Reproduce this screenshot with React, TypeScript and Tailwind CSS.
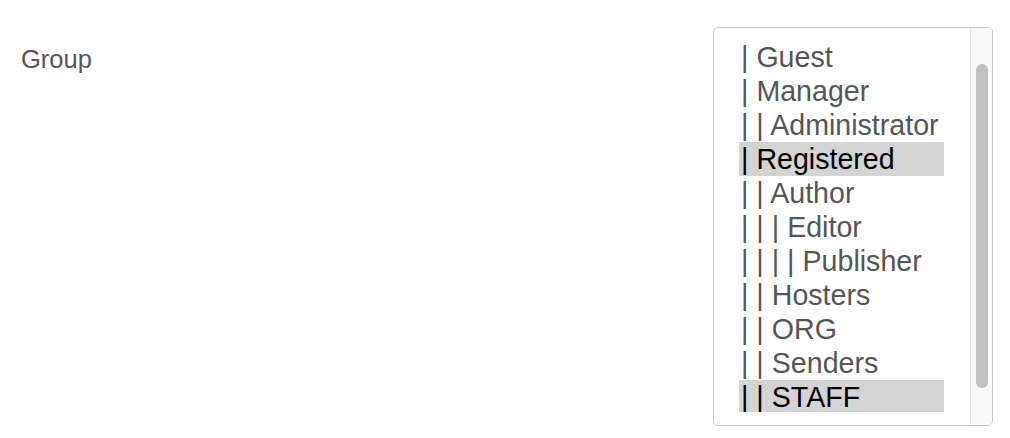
import React from "react";

const items: { label: string; depth: number; selected?: boolean }[] = [
  { label: "Guest", depth: 1 },
  { label: "Manager", depth: 1 },
  { label: "Administrator", depth: 2 },
  { label: "Registered", depth: 1, selected: true },
  { label: "Author", depth: 2 },
  { label: "Editor", depth: 3 },
  { label: "Publisher", depth: 4 },
  { label: "Hosters", depth: 2 },
  { label: "ORG", depth: 2 },
  { label: "Senders", depth: 2 },
  { label: "STAFF", depth: 2, selected: true },
];

export default function App() {
  return (
    <div
      className="w-[1010px] h-[438px] bg-white flex justify-between pt-[27px] pl-[21px] pr-[17px]"
      style={{ fontFamily: '"Liberation Sans", Arial, Helvetica, sans-serif' }}
    >
      <div className="text-[25.5px] leading-[30px] text-[#555] pt-[17px]">Group</div>
      <div className="w-[280px] h-[399px] border border-[#c8c8c8] rounded-[5px] flex overflow-hidden">
        <div className="flex-1 h-[384px] overflow-hidden pt-[12px] pl-[25px]">
          {items.map((it) => (
            <div
              key={it.label}
              className={`w-[205px] h-[34px] leading-[34px] text-[28.6px] whitespace-nowrap pl-[2px] ${
                it.selected ? "bg-[#d4d4d4] text-black" : "text-[#555]"
              }`}
            >
              {"| ".repeat(it.depth)}
              {it.label}
            </div>
          ))}
        </div>
        <div className="w-[22px] h-full bg-[#fafafa] border-l border-[#e6e6e6] flex justify-center pt-[36px]">
          <div className="w-[12px] h-[324px] rounded-full bg-[#c1c1c1]" />
        </div>
      </div>
    </div>
  );
}
